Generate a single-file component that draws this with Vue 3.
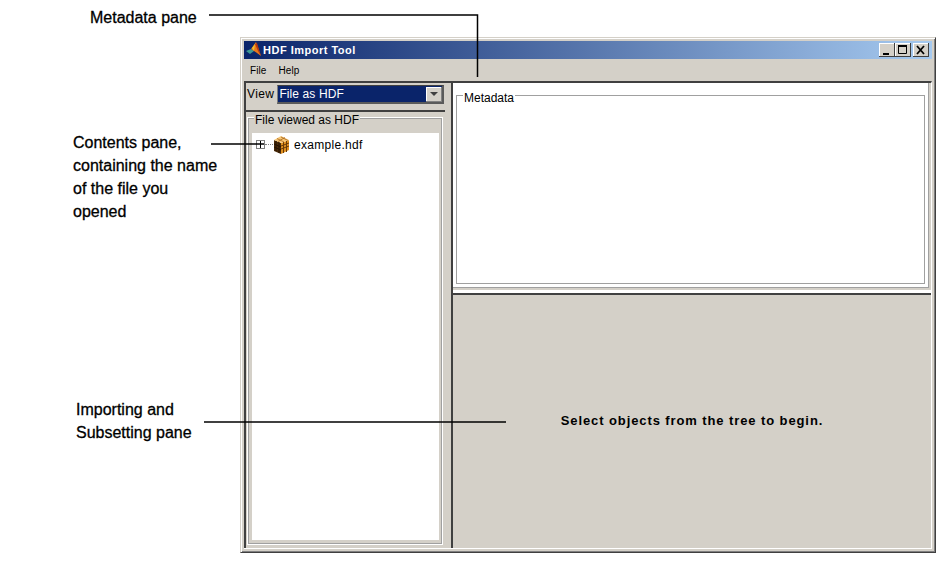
<template>
  <div class="page">
    <!-- callouts around the screenshot -->
    <div class="note note-meta">Metadata pane</div>
    <div class="note note-contents">Contents pane,<br>containing the name<br>of the file you<br>opened</div>
    <div class="note note-import">Importing and<br>Subsetting pane</div>

    <div class="win">
      <div class="titlebar">
        <svg class="logo" width="16" height="16" viewBox="0 0 16 16">
          <path d="M0 9 L5 7 L8 9 L4 12 Z" fill="#3f9a94" />
          <path d="M5 7 L10 0 L15 14 L11 11 L8 9 Z" fill="#e8791c" />
          <path d="M9 2 L11 1 L15 14 L12 9 Z" fill="#b8380f" />
          <path d="M6 6 L9 2 L8 9 Z" fill="#f2c12e" />
        </svg>
        <span class="title">HDF Import Tool</span>
        <div class="win-btns">
          <div class="wbtn">
            <svg width="16" height="14" viewBox="0 0 16 14"><rect x="4" y="10" width="6" height="2" fill="#000" /></svg>
          </div>
          <div class="wbtn">
            <svg width="16" height="14" viewBox="0 0 16 14"><path d="M3.5 2.5h8v8h-8z" fill="none" stroke="#000" /><rect x="3" y="2" width="9" height="2" fill="#000" /></svg>
          </div>
          <div class="wbtn wbtn-close">
            <svg width="16" height="14" viewBox="0 0 16 14"><path d="M4 3l7 8M11 3l-7 8" stroke="#000" stroke-width="1.8" fill="none" /></svg>
          </div>
        </div>
      </div>

      <div class="menubar">
        <span class="menu">File</span>
        <span class="menu">Help</span>
      </div>

      <div class="panes">
        <div class="left">
          <div class="view-row">
            <span class="view-label">View</span>
            <div class="combo">
              <span class="combo-val">File as HDF</span>
              <div class="combo-btn"><span class="arrow"></span></div>
            </div>
          </div>
          <div class="tree-pane">
            <div class="tree-group">
              <span class="legend">File viewed as HDF</span>
              <div class="tree">
                <div class="tree-row">
                  <span class="expander"></span>
                  <span class="dots"></span>
                  <svg class="box" width="17" height="18" viewBox="0 0 17 18">
                    <path d="M1 4 L8 7 V18 L1 15 Z" fill="#4a2a08" />
                    <path d="M8 7 L16 4 V14 L8 18 Z" fill="#e0901f" />
                    <path d="M1 4 L8 0 L16 4 L8 7 Z" fill="#f6c777" />
                    <path d="M10.5 6v11M13.5 5v11M8 10l8-3M8 13l8-3" stroke="#6a3a08" stroke-width="1" fill="none" />
                    <path d="M3 5v10M6 6v11M1 8l7 3M1 11l7 3" stroke="#241202" stroke-width="1" fill="none" />
                    <path d="M4 2.5l7 3.5M8 1l7 3.5M12 1.5l-7 4" stroke="#a8651a" stroke-width="0.8" fill="none" />
                  </svg>
                  <span class="tree-label">example.hdf</span>
                </div>
              </div>
            </div>
          </div>
        </div>

        <div class="right">
          <div class="meta-pane">
            <div class="meta-inner">
              <div class="meta-group">
                <span class="legend legend-meta">Metadata</span>
              </div>
            </div>
          </div>
          <div class="import-pane">
            <span class="hint">Select objects from the tree to begin.</span>
          </div>
        </div>
      </div>
    </div>

    <!-- leader lines -->
    <svg class="leaders" width="949" height="564">
      <path d="M209 15H477.5V77" />
      <path d="M211 144H264" />
      <path d="M260.5 141V148" class="tick" />
      <path d="M204 422H506" />
    </svg>
  </div>
</template>

<script setup>
</script>

<style scoped>
.page {
  position: relative;
  width: 949px;
  height: 564px;
  overflow: hidden;
  background: #fff;
  font-family: "Liberation Sans", Arial, sans-serif;
}

.note {
  position: absolute;
  font-size: 16px;
  line-height: 23px;
  color: #000;
  white-space: nowrap;
  -webkit-text-stroke: 0.3px #000;
}
.note-meta { left: 90px; top: 6px; }
.note-contents { left: 73px; top: 131px; }
.note-import { left: 76px; top: 398px; }

.leaders {
  position: absolute;
  left: 0;
  top: 0;
  pointer-events: none;
}
.leaders path { fill: none; stroke: #000; stroke-width: 1.5; }
.leaders .tick { stroke-width: 1; }

.win {
  position: absolute;
  left: 240px;
  top: 37px;
  width: 696px;
  height: 516px;
  box-sizing: border-box;
  padding: 3px;
  display: flex;
  flex-direction: column;
  background: #d4d0c8;
  border-top: 1px solid #d4d0c8;
  border-left: 1px solid #d4d0c8;
  border-right: 1px solid #404040;
  border-bottom: 1px solid #404040;
  box-shadow: inset 1px 1px 0 #fff, inset -1px -1px 0 #808080;
}

.titlebar {
  height: 18px;
  flex-shrink: 0;
  display: flex;
  align-items: center;
  background: linear-gradient(90deg, #0a246a, #a6caf0);
  color: #fff;
}
.logo { margin: 0 2px 0 2px; flex-shrink: 0; }
.title { font-size: 11px; font-weight: 700; letter-spacing: 0.5px; margin-left: -1px; }
.win-btns { margin-left: auto; margin-right: 3px; display: flex; }
.wbtn {
  width: 16px;
  height: 14px;
  background: #d4d0c8;
  box-shadow: inset -1px -1px 0 #404040, inset 1px 1px 0 #fff;
}
.wbtn-close { margin-left: 2px; }
.wbtn svg { display: block; }

.menubar {
  height: 22px;
  flex-shrink: 0;
  display: flex;
  align-items: center;
  gap: 12px;
  padding-left: 6px;
  font-size: 10px;
  letter-spacing: 0.1px;
  color: #000;
}

.panes {
  flex: 1;
  min-height: 0;
  display: flex;
  border-top: 2px solid #404040;
  border-right: 1px solid #fff;
  border-bottom: 1px solid #fff;
}

.left {
  width: 204px;
  flex-shrink: 0;
  display: flex;
  flex-direction: column;
  border-left: 2px solid #404040;
  box-sizing: border-box;
}
.view-row {
  height: 27px;
  flex-shrink: 0;
  box-sizing: border-box;
  display: flex;
  align-items: flex-start;
  padding: 2px 0 0 1px;
  gap: 3px;
}
.view-label { font-size: 12px; line-height: 19px; color: #000; letter-spacing: 0.4px; }
.combo {
  width: 167px;
  height: 19px;
  box-sizing: border-box;
  display: flex;
  align-items: center;
  justify-content: space-between;
  background: #0a246a;
  border-top: 1px solid #404040;
  border-left: 1px solid #808080;
  border-right: 2px solid #5a5a5a;
  border-bottom: 2px solid #5a5a5a;
  color: #fff;
  font-size: 12px;
}
.combo-val { padding-left: 1px; letter-spacing: 0.1px; }
.combo-btn {
  width: 16px;
  height: 15px;
  display: flex;
  align-items: center;
  justify-content: center;
  background: #d4d0c8;
  box-shadow: inset -1px -1px 0 #808080, inset 1px 1px 0 #fff;
}
.arrow {
  width: 0;
  height: 0;
  border-left: 4px solid transparent;
  border-right: 4px solid transparent;
  border-top: 4px solid #404040;
}

.tree-pane {
  flex: 1;
  min-height: 0;
  display: flex;
  flex-direction: column;
  padding: 6px 3px 4px 2px;
  border-top: 2px solid #404040;
  margin-right: 3px;
}
.tree-group {
  position: relative;
  flex: 1;
  min-height: 0;
  box-sizing: border-box;
  display: flex;
  flex-direction: column;
  padding: 14px 2px 3px 3px;
  border: 1px solid #a0a0a0;
  box-shadow: 0 0 0 1px #fff;
}
.legend {
  position: absolute;
  left: 5px;
  top: -5px;
  padding: 0 1px;
  background: #d4d0c8;
  font-size: 12px;
  line-height: 12px;
  color: #000;
}
.tree {
  flex: 1;
  background: #fff;
  padding-top: 2px;
}
.tree-row {
  display: flex;
  align-items: center;
  height: 19px;
  padding-left: 4px;
}
.expander {
  width: 7px;
  height: 7px;
  border: 1px solid #808080;
  flex-shrink: 0;
}
.dots {
  width: 8px;
  border-top: 1px dotted #808080;
  flex-shrink: 0;
}
.box { flex-shrink: 0; }
.tree-label { margin-left: 4px; font-size: 12px; color: #000; letter-spacing: 0.3px; }

.right {
  flex: 1;
  min-width: 0;
  margin-left: 3px;
  display: flex;
  flex-direction: column;
  border-left: 2px solid #404040;
}
.meta-pane {
  height: 210px;
  flex-shrink: 0;
  box-sizing: border-box;
  padding: 0 2px 5px 0;
  box-shadow: inset 0 -3px 0 #fff;
}
.meta-inner {
  height: 100%;
  box-sizing: border-box;
  padding: 12px 3px 3px 3px;
  background: #fff;
  border-right: 1px solid #a0a0a0;
  border-bottom: 1px solid #a0a0a0;
}
.meta-group {
  position: relative;
  height: 100%;
  box-sizing: border-box;
  border: 1px solid #a0a0a0;
  background: #fff;
}
.legend-meta { background: #fff; left: 6px; top: -4px; }

.import-pane {
  flex: 1;
  display: flex;
  align-items: center;
  justify-content: center;
  padding-bottom: 2px;
  border-top: 2px solid #404040;
}
.hint {
  font-size: 13px;
  font-weight: 700;
  color: #000;
  letter-spacing: 0.9px;
}
</style>
